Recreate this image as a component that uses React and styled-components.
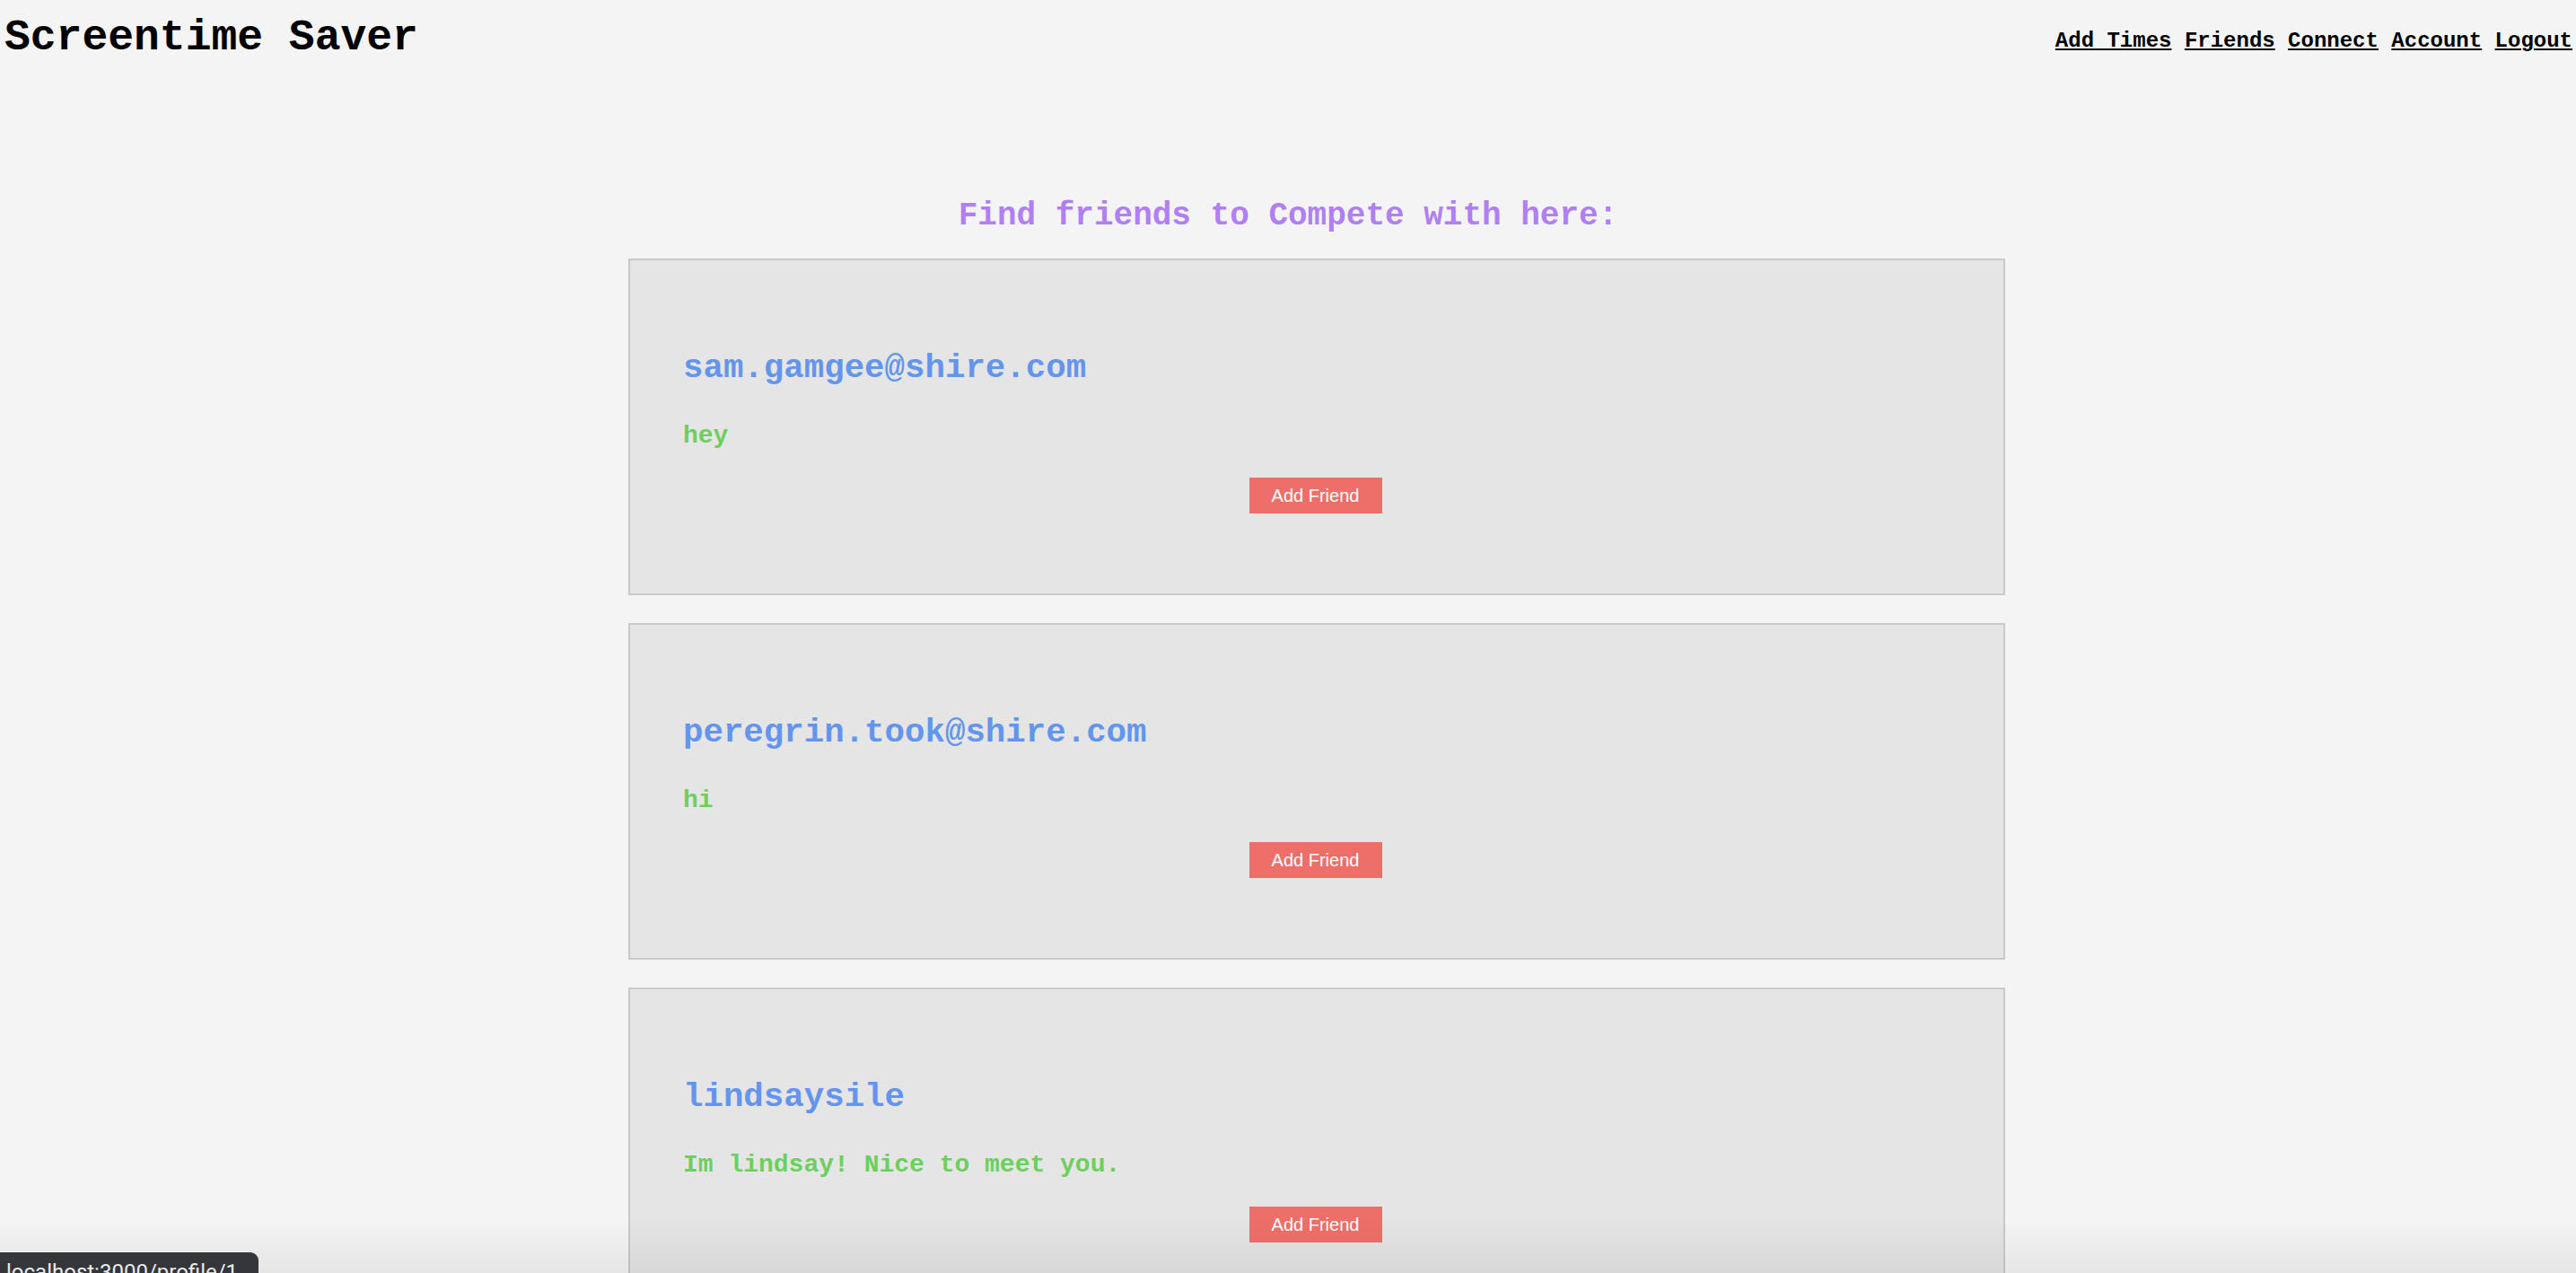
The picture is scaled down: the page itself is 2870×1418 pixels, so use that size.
import React from "react";
import styled, { createGlobalStyle } from "styled-components";

const GlobalStyle = createGlobalStyle`
  html, body {
    margin: 0;
    padding: 0;
    height: 100%;
    overflow: hidden;
    background: #f4f4f4;
  }
  body {
    font-family: "Liberation Mono", "Courier New", monospace;
  }
`;

const Page = styled.div`
  min-height: 100vh;
  background: #f4f4f4;
`;

const Header = styled.header`
  display: flex;
  justify-content: space-between;
  align-items: flex-start;
  padding: 0 4px 0 5px;
`;

const Brand = styled.h1`
  margin: 14px 0 0 0;
  font-size: 48px;
  line-height: 56px;
  font-weight: 700;
  color: #000;
  white-space: pre;
`;

const Nav = styled.nav`
  margin-top: 32px;
  font-size: 24px;
  line-height: 28px;
  font-weight: 700;
  white-space: pre;
`;

const NavLink = styled.a`
  color: #000;
  text-decoration: underline;
  text-underline-offset: 2px;
  text-decoration-thickness: 2px;
  cursor: pointer;
`;

const Main = styled.main`
  display: flex;
  flex-direction: column;
  align-items: center;
`;

const Heading = styled.h2`
  margin: 151px 0 27px 0;
  font-size: 36px;
  line-height: 40px;
  font-weight: 700;
  color: #b07ff2;
  text-align: center;
  white-space: pre;
`;

const List = styled.div`
  display: flex;
  flex-direction: column;
  gap: 31px;
  padding-left: 64px;
`;

const Card = styled.section`
  box-sizing: border-box;
  width: 1534px;
  height: 375px;
  border: 2px solid #cacaca;
  background: #e5e5e5;
  padding: 98px 58px 0 59px;
  display: flex;
  flex-direction: column;
`;

const Name = styled.h3`
  margin: 0 0 37.5px 0;
  font-size: 37.44px;
  line-height: 44px;
  font-weight: 700;
  color: #6495ed;
`;

const Bio = styled.p`
  margin: 0 0 30.5px 0;
  font-size: 28px;
  line-height: 32px;
  font-weight: 700;
  color: #6ccf5e;
  white-space: pre;
`;

const AddButton = styled.button`
  align-self: center;
  width: 148px;
  height: 40px;
  margin-right: 4px;
  border: none;
  border-radius: 0;
  background: #ee6f6a;
  color: #fff;
  font-family: "Liberation Sans", Arial, sans-serif;
  font-size: 20px;
  padding: 0;
  cursor: pointer;
`;

const BottomShade = styled.div`
  position: fixed;
  left: 0;
  right: 0;
  bottom: 0;
  height: 62px;
  pointer-events: none;
  background: linear-gradient(to bottom, rgba(0, 0, 0, 0), rgba(0, 0, 0, 0.055));
`;

const StatusBubble = styled.div`
  position: fixed;
  left: 0;
  bottom: 0;
  height: 23px;
  overflow: hidden;
  box-sizing: border-box;
  padding: 8px 23px 0 7px;
  background: #35363a;
  border-top-right-radius: 9px;
  color: #e8eaed;
  font-family: Roboto, "Liberation Sans", sans-serif;
  font-size: 24px;
  line-height: 28px;
  white-space: nowrap;
`;

const users = [
  { name: "sam.gamgee@shire.com", bio: "hey" },
  { name: "peregrin.took@shire.com", bio: "hi" },
  { name: "lindsaysile", bio: "Im lindsay! Nice to meet you." },
];

const links = ["Add Times", "Friends", "Connect", "Account", "Logout"];

export default function App() {
  return (
    <Page>
      <GlobalStyle />
      <Header>
        <Brand>Screentime Saver</Brand>
        <Nav>
          {links.map((l, i) => (
            <React.Fragment key={l}>
              {i > 0 ? " " : null}
              <NavLink>{l}</NavLink>
            </React.Fragment>
          ))}
        </Nav>
      </Header>
      <Main>
        <Heading>Find friends to Compete with here:</Heading>
        <List>
          {users.map((u) => (
            <Card key={u.name}>
              <Name>{u.name}</Name>
              <Bio>{u.bio}</Bio>
              <AddButton>Add Friend</AddButton>
            </Card>
          ))}
        </List>
      </Main>
      <BottomShade />
      <StatusBubble>localhost:3000/profile/1</StatusBubble>
    </Page>
  );
}
